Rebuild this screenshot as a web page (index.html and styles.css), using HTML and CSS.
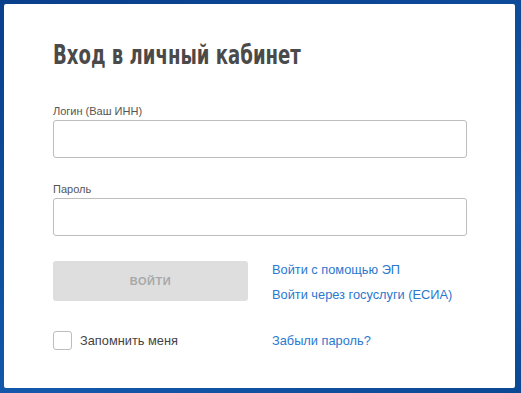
FILE: index.html
```html
<!DOCTYPE html>
<html lang="ru">
<head>
<meta charset="utf-8">
<title>Вход в личный кабинет</title>
<link rel="stylesheet" href="styles.css">
</head>
<body>
<div class="card">
  <h1 class="title"><span class="title-text">Вход в личный кабинет</span></h1>
  <label class="label label-first">Логин (Ваш ИНН)</label>
  <div class="input"></div>
  <label class="label label-second">Пароль</label>
  <div class="input"></div>
  <div class="row row-actions">
    <div class="btn">ВОЙТИ</div>
    <div class="links">
      <a class="link">Войти с помощью ЭП</a>
      <a class="link">Войти через госуслуги (ЕСИА)</a>
    </div>
  </div>
  <div class="row row-remember">
    <div class="remember">
      <span class="checkbox"></span>
      <span class="remember-text">Запомнить меня</span>
    </div>
    <a class="link">Забыли пароль?</a>
  </div>
</div>
</body>
</html>
```
FILE: styles.css
```css
html, body {
  margin: 0;
  height: 100%;
}
body {
  background: linear-gradient(160deg, #0a3f8c 0%, #0e4f9f 45%, #1358ab 70%, #0b4894 100%);
  padding: 4px 6px 5px 4px;
  box-sizing: border-box;
  font-family: "Liberation Sans", Arial, sans-serif;
  overflow: hidden;
}
.card {
  width: 511px;
  height: 384px;
  box-sizing: border-box;
  background: #fff;
  border-radius: 2px;
  padding: 35px 48px 0 49px;
}
.title {
  margin: 0;
  font-family: "DejaVu Sans Condensed", "DejaVu Sans", sans-serif;
  font-weight: bold;
  font-size: 27px;
  line-height: 32px;
  color: #4a4a4a;
  white-space: nowrap;
}
.title-text {
  display: inline-block;
  transform: scaleX(0.745);
  transform-origin: left center;
}
.label {
  display: block;
  font-size: 11px;
  line-height: 14px;
  color: #555;
  margin-bottom: 2px;
}
.label-first {
  margin-top: 33px;
}
.label-second {
  margin-top: 24px;
}
.input {
  height: 38px;
  box-sizing: border-box;
  border: 1px solid #bdbdbd;
  border-radius: 3px;
  background: #fff;
}
.row {
  display: grid;
  grid-template-columns: 195px 1fr;
  column-gap: 24px;
}
.row-actions {
  margin-top: 25px;
}
.btn {
  height: 40px;
  border-radius: 3px;
  background: #dedede;
  color: #a8a8a8;
  font-weight: bold;
  font-size: 11px;
  letter-spacing: 0.5px;
  display: flex;
  align-items: center;
  justify-content: center;
}
.links {
  display: flex;
  flex-direction: column;
  gap: 9px;
  padding-top: 1px;
}
.link {
  font-size: 12.8px;
  line-height: 16px;
  color: #2a78cf;
  text-decoration: none;
}
.row-remember {
  margin-top: 28px;
  align-items: center;
}
.row-remember .link {
  line-height: 19px;
}
.remember {
  display: flex;
  align-items: center;
  gap: 8px;
}
.checkbox {
  width: 19px;
  height: 19px;
  box-sizing: border-box;
  border: 1px solid #bdbdbd;
  border-radius: 3px;
}
.remember-text {
  font-size: 12.8px;
  line-height: 19px;
  color: #444;
}
```
